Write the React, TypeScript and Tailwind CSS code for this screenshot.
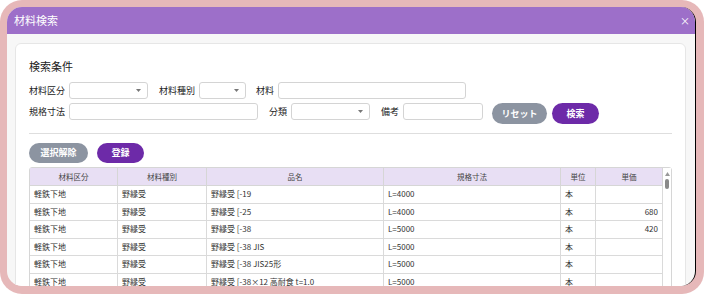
import React from "react";

const font = { fontFamily: '"Noto Sans CJK JP", "Noto Sans", sans-serif' };

function Caret() {
  return (
    <svg width="5" height="3" viewBox="0 0 5 3" className="shrink-0">
      <path d="M0 0 L5 0 L2.5 3 Z" fill="#777" />
    </svg>
  );
}

function Select({ w }: { w: string }) {
  return (
    <div className={`${w} h-[17px] rounded-[3px] border border-[#d4d4d4] bg-white flex items-center justify-end pr-[6px]`}>
      <Caret />
    </div>
  );
}

function Input({ w }: { w: string }) {
  return <div className={`${w} h-[17px] rounded-[3px] border border-[#d4d4d4] bg-white`} />;
}

function Label({ children, ml }: { children: React.ReactNode; ml?: string }) {
  return (
    <div className={`h-[17px] flex items-center text-[9px] text-[#222] mr-[4px] ${ml ?? ""}`}>{children}</div>
  );
}

const rows = [
  ["軽鉄下地", "野縁受", "野縁受 [-19", "L=4000", "本", ""],
  ["軽鉄下地", "野縁受", "野縁受 [-25", "L=4000", "本", "680"],
  ["軽鉄下地", "野縁受", "野縁受 [-38", "L=5000", "本", "420"],
  ["軽鉄下地", "野縁受", "野縁受 [-38 JIS", "L=5000", "本", ""],
  ["軽鉄下地", "野縁受", "野縁受 [-38 JIS25形", "L=5000", "本", ""],
  ["軽鉄下地", "野縁受", "野縁受 [-38×12 高耐食 t=1.0", "L=5000", "本", ""],
  ["軽鉄下地", "野縁受", "野縁受 [-38×12", "L=5000", "本", ""],
];

const cols = ["w-[88px]", "w-[89px]", "w-[177px]", "w-[177px]", "w-[35px]", "w-[67px]"];
const heads = ["材料区分", "材料種別", "品名", "規格寸法", "単位", "単価"];

export default function App() {
  return (
    <div className="w-[704px] h-[294px] bg-white" style={font}>
      <div className="w-full h-full rounded-[22px] bg-[#e6b8b9] pt-[7px] pl-[7px] pr-[8px] pb-[8px]">
        <div className="w-full h-full rounded-[15px] overflow-hidden bg-[#f7f7f7] border-r-[1.5px] border-black flex flex-col">
          <div className="h-[27px] shrink-0 bg-[#9d6fc9] flex items-center justify-between pl-[7px] pr-[5px]">
            <span className="text-[11px] text-white leading-none">材料検索</span>
            <span className="text-[10px] text-white leading-none">×</span>
          </div>
          <div className="px-[8px] pt-[9px] pr-[9px]">
            <div className="rounded-[6px] border border-[#e6e6e6] bg-white pt-[14px] px-[13px] pb-[20px]">
              <div className="h-[16px] text-[11px] leading-[16px] text-[#222]">検索条件</div>
              <div className="mt-[8px] flex items-start">
                <Label>材料区分</Label>
                <Select w="w-[79px]" />
                <Label ml="ml-[11px]">材料種別</Label>
                <Select w="w-[47px]" />
                <Label ml="ml-[10px]">材料</Label>
                <Input w="w-[188px]" />
              </div>
              <div className="mt-[4px] flex items-start">
                <Label>規格寸法</Label>
                <Input w="w-[189px]" />
                <Label ml="ml-[11px]">分類</Label>
                <Select w="w-[79px]" />
                <Label ml="ml-[11px]">備考</Label>
                <Input w="w-[80px]" />
                <button className="ml-[9px] h-[21px] w-[55px] rounded-full bg-[#8c94a1] text-white text-[9px] font-bold">リセット</button>
                <button className="ml-[5px] h-[21px] w-[47px] rounded-full bg-[#6d2aa8] text-white text-[9px] font-bold">検索</button>
              </div>
              <div className="mt-[9px] border-t border-[#dedede]" />
              <div className="mt-[9px] flex gap-[9px]">
                <button className="h-[20px] w-[59px] rounded-full bg-[#8c94a1] text-white text-[9px] font-bold">選択解除</button>
                <button className="h-[20px] w-[47px] rounded-full bg-[#6d2aa8] text-white text-[9px] font-bold">登録</button>
              </div>
              <div className="mt-[4px] border border-[#d6d6d6] rounded-[3px] flex">
                <div className="w-[633px]">
                  <div className="flex h-[18px] bg-[#e8dff4] border-b border-[#d6d6d6]">
                    {heads.map((h, i) => (
                      <div key={h} className={`${cols[i]} border-r border-[#d6d6d6] flex items-center justify-center text-[7.5px] text-[#444]`}>
                        {h}
                      </div>
                    ))}
                  </div>
                  {rows.map((r, ri) => (
                    <div key={ri} className="flex h-[17.5px] border-b border-[#dadada] bg-white">
                      {r.map((c, ci) => (
                        <div
                          key={ci}
                          className={`${cols[ci]} border-r border-[#dadada] flex items-center text-[8px] text-[#333] whitespace-nowrap ${ci === 5 ? "justify-end pr-[4px]" : "pl-[4px]"}`}
                        >
                          {c}
                        </div>
                      ))}
                    </div>
                  ))}
                </div>
                <div className="w-[8px] flex flex-col items-center pt-[4px] bg-white">
                  <svg width="5" height="4" viewBox="0 0 5 4">
                    <path d="M0 4 L5 4 L2.5 0 Z" fill="#999" />
                  </svg>
                  <div className="mt-[3px] w-[4px] h-[10px] rounded-full bg-[#8a8a8a]" />
                </div>
              </div>
            </div>
          </div>
        </div>
      </div>
    </div>
  );
}
